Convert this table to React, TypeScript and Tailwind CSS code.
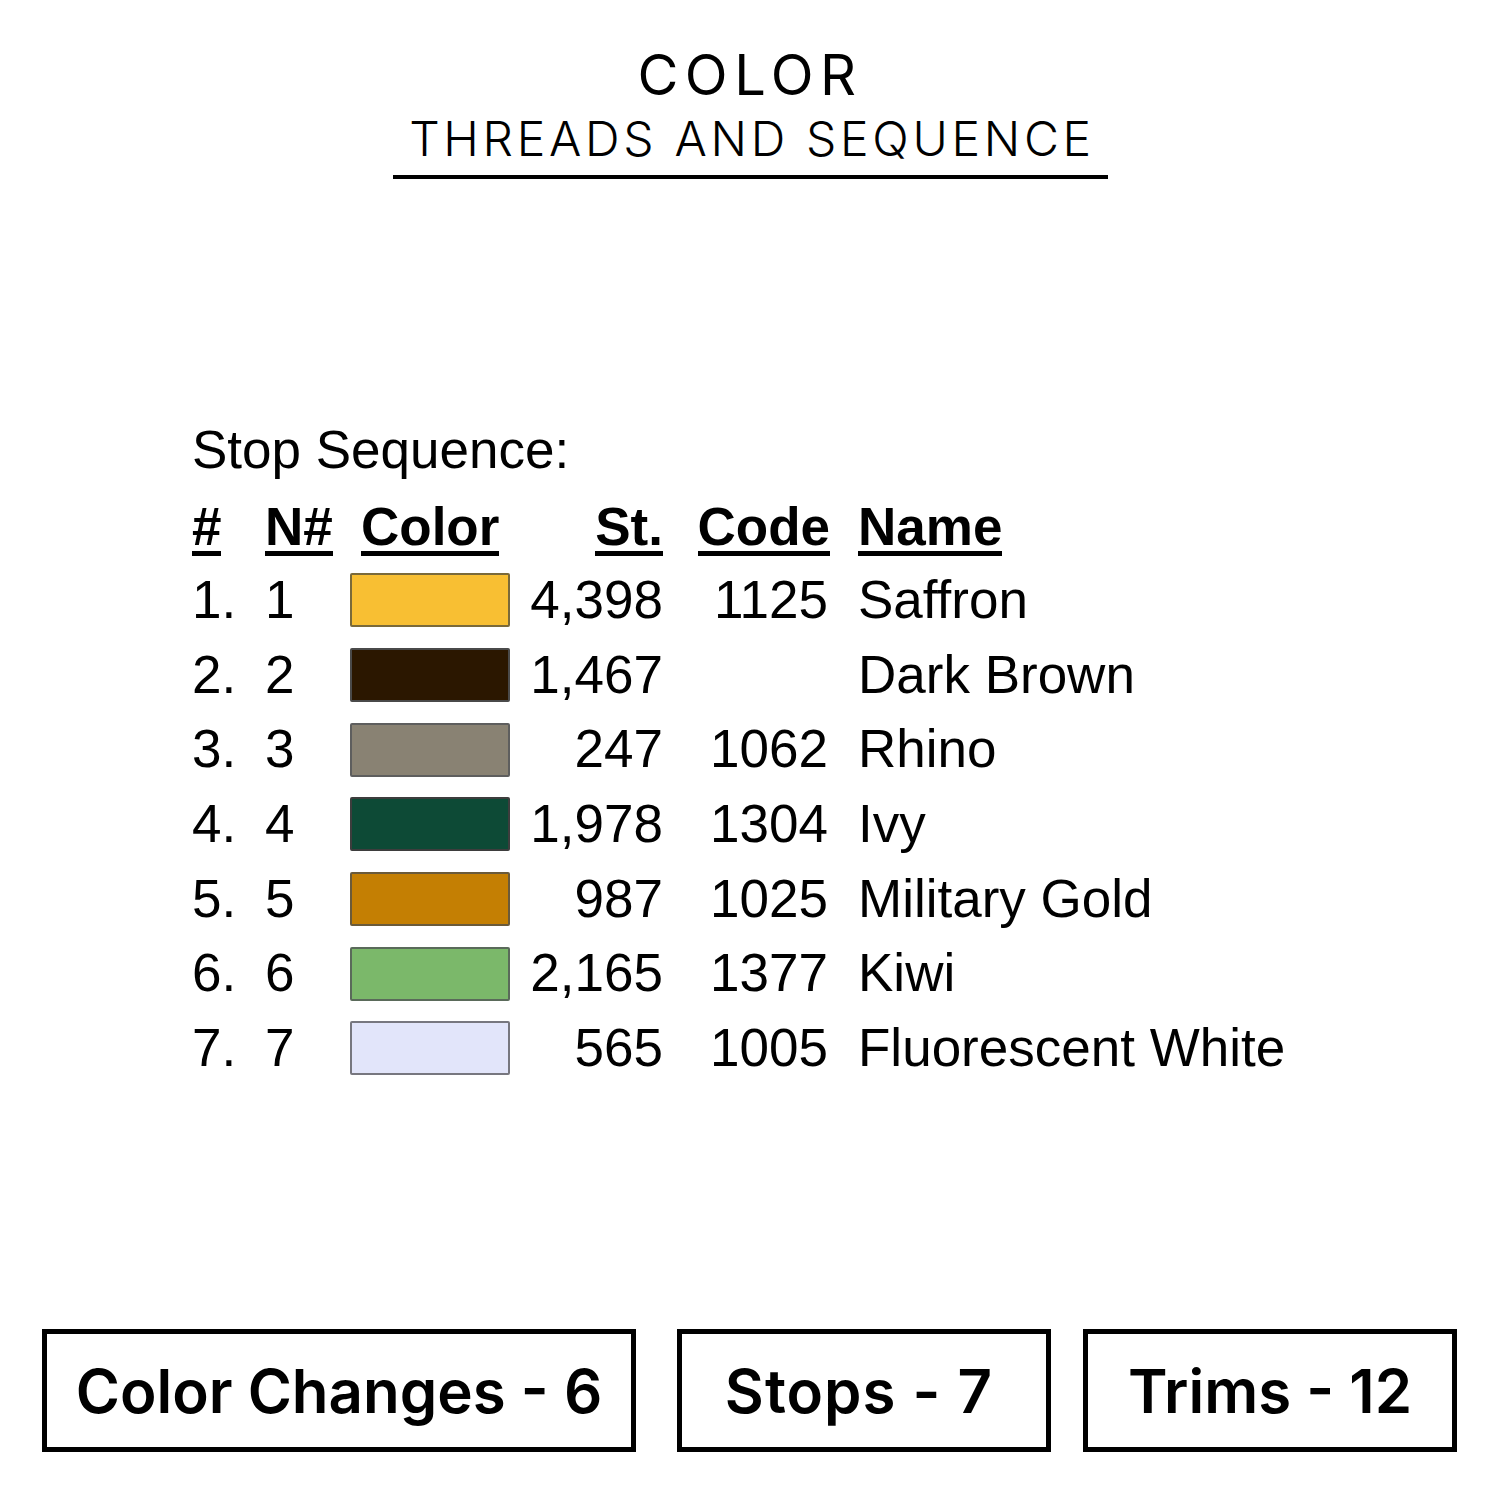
import React from "react";

const rows = [
  { n: "1.", k: "1", color: "#F8BF33", border: "#7a6a3a", st: "4,398", code: "1125", name: "Saffron" },
  { n: "2.", k: "2", color: "#2B1700", border: "#4a4a4a", st: "1,467", code: "", name: "Dark Brown" },
  { n: "3.", k: "3", color: "#898273", border: "#5e5e5e", st: "247", code: "1062", name: "Rhino" },
  { n: "4.", k: "4", color: "#0D4A36", border: "#3d3d3d", st: "1,978", code: "1304", name: "Ivy" },
  { n: "5.", k: "5", color: "#C47F03", border: "#6a5a3a", st: "987", code: "1025", name: "Military Gold" },
  { n: "6.", k: "6", color: "#7BB86A", border: "#5a6a5a", st: "2,165", code: "1377", name: "Kiwi" },
  { n: "7.", k: "7", color: "#E2E5FA", border: "#77777f", st: "565", code: "1005", name: "Fluorescent White" },
];

const head = "inline-block border-b-[5px] border-black leading-[48px] font-bold";

export default function App() {
  return (
    <div className="w-[1500px] h-[1500px] bg-white text-black flex flex-col">
      <div className="flex flex-col items-center pt-[47px] font-['Inter',sans-serif]">
        <div className="text-[56px] leading-[56px] font-normal tracking-[6.5px]">COLOR</div>
        <div className="mt-[12px] text-[48px] leading-[48px] font-light tracking-[3.7px] pl-[4px]">THREADS AND SEQUENCE</div>
        <div className="mt-[12px] h-[4px] w-[715px] bg-black"></div>
      </div>

      <div className="mt-[241px] pl-[192px] font-['Liberation_Sans',Arial,sans-serif] text-[53px]">
        <div className="leading-[60px]">Stop Sequence:</div>
        <div className="mt-[23px] flex items-start leading-[48px]">
          <div className="w-[73px]"><span className={head}>#</span></div>
          <div className="w-[85px]"><span className={head}>N#</span></div>
          <div className="w-[160px] pl-[11px]"><span className={head}>Color</span></div>
          <div className="w-[153px] text-right"><span className={head}>St.</span></div>
          <div className="w-[167px] text-right"><span className={head}>Code</span></div>
          <div className="pl-[28px]"><span className={head}>Name</span></div>
        </div>
        <div className="mt-[7px] flex flex-col">
          {rows.map((r) => (
            <div key={r.n} className="flex items-center h-[74.7px] leading-[74.7px]">
              <div className="w-[73px]">{r.n}</div>
              <div className="w-[85px]">{r.k}</div>
              <div className="w-[160px] flex items-center">
                <div
                  className="w-[160px] h-[54px] rounded-[2px] border-2"
                  style={{ backgroundColor: r.color, borderColor: r.border }}
                ></div>
              </div>
              <div className="w-[153px] text-right">{r.st}</div>
              <div className="w-[165px] text-right">{r.code}</div>
              <div className="pl-[30px]">{r.name}</div>
            </div>
          ))}
        </div>
      </div>

      <div className="mt-auto mb-[48px] flex items-stretch pl-[42px] font-['Inter',sans-serif] font-semibold text-[60px]">
        <div className="w-[594px] h-[123px] border-[5px] border-black flex items-center justify-center">
          Color Changes - 6
        </div>
        <div className="ml-[41px] w-[374px] h-[123px] border-[5px] border-black flex items-center justify-center tracking-[1px] pr-[10px]">
          Stops - 7
        </div>
        <div className="ml-[32px] w-[374px] h-[123px] border-[5px] border-black flex items-center justify-center">
          Trims - 12
        </div>
      </div>
    </div>
  );
}
